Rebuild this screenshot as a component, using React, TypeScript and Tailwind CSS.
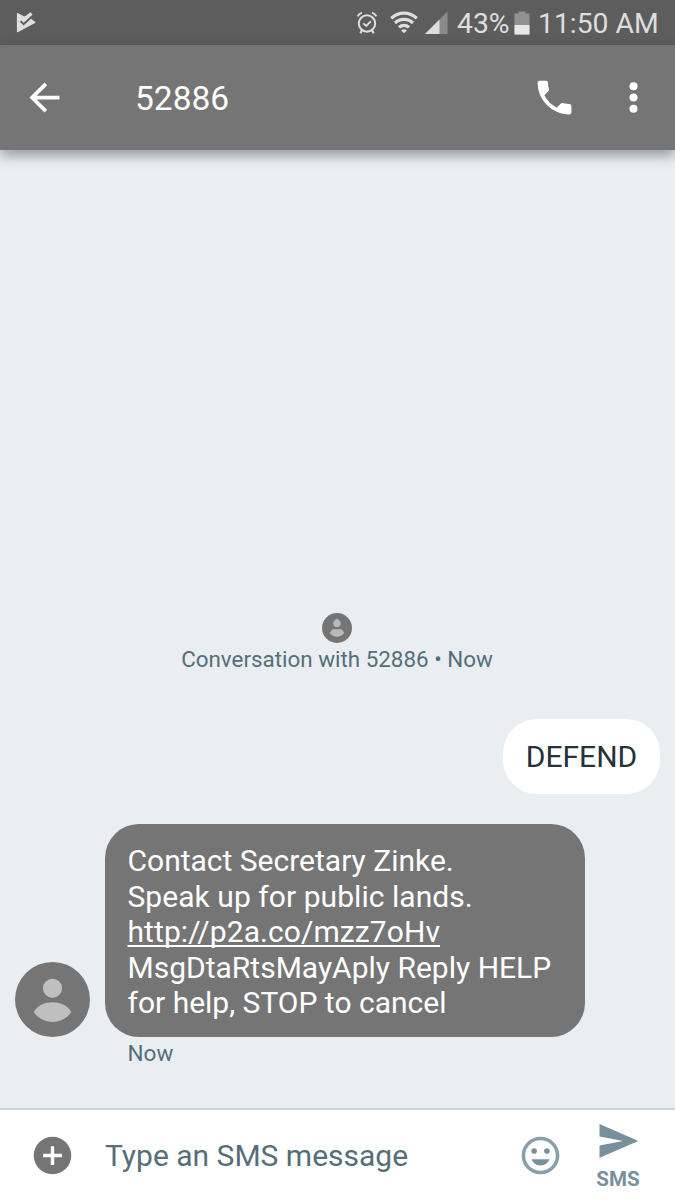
import React from "react";

function StatusBar() {
  return (
    <div className="flex h-[45px] shrink-0 items-center bg-[#5d5d5d] pl-4 text-[#dedede]">
      <svg className="h-[21px] w-5" viewBox="0 0 20 21" aria-hidden="true">
        <path d="M1.500 1.500 L8.600 5.200 L14.600 1 L15.800 2.600 L13.800 6.600 L18.800 10.400 L1.500 19.600 Z" fill="#dedede" stroke="#dedede" strokeWidth="1.200" strokeLinejoin="round" />
        <path d="M4.600 9.200 L7.600 12.200 L16.500 4" fill="none" stroke="#5d5d5d" strokeWidth="1.900" />
      </svg>
      <div className="ml-auto flex items-center">
        <svg className="h-6 w-[22px]" viewBox="0 0 22 24" fill="none" stroke="#dedede" aria-hidden="true">
          <circle cx="11" cy="12.5" r="8.2" strokeWidth="2" />
          <path d="M7.4 12.4 L10.2 15 L14.8 10.4" strokeWidth="1.9" />
          <path d="M1.6 5.4 Q2.8 2.6 6 1.600 M20.4 5.400 Q19.200 2.600 16 1.600" strokeWidth="2" />
          <path d="M6 19 L4.4 22.4 M16 19 L17.6 22.4" strokeWidth="2.2" />
        </svg>
        <svg className="ml-3 h-6 w-7" viewBox="0 0 28 24" fill="none" stroke="#dedede" strokeWidth="3.2" aria-hidden="true">
          <path d="M1.200 7.400 A18.4 18.4 0 0 1 26.800 7.400" />
          <path d="M5 12 A12.8 12.8 0 0 1 23 12" />
          <path d="M9 16.400 A7.2 7.2 0 0 1 19 16.400" />
          <path d="M14 22.3 L11 19.6 A4.3 4.3 0 0 1 17 19.6 Z" fill="#dedede" stroke="none" />
        </svg>
        <svg className="ml-[7px] h-6 w-[23px]" viewBox="0 0 23 24" aria-hidden="true">
          <path d="M0 23 L22.5 0.5 V23 Z" fill="#8b8b8b" />
          <path d="M0 23 L14.5 8.5 V23 Z" fill="#dedede" />
        </svg>
        <span className="ml-[9px] w-[52px] whitespace-nowrap pt-[2px] text-[28.300px] leading-[45px]">43%</span>
        <svg className="ml-[5px] h-6 w-4" viewBox="0 0 16 24" aria-hidden="true">
          <path d="M4.5 0.5 H11.5 V2.5 H15.5 V23.5 H0.5 V2.5 H4.5 Z" fill="#929292" />
          <path d="M0.5 14 H15.5 V23.5 H0.5 Z" fill="#e8e8e8" />
        </svg>
        <span className="ml-2 w-[137px] whitespace-nowrap pt-[2px] text-[28.300px] leading-[45px]">11:50 AM</span>
      </div>
    </div>
  );
}

function AppBar() {
  return (
    <header className="z-10 flex h-[105px] shrink-0 items-center bg-[#757575] pl-[22px] pr-[19px] text-white shadow-[0_6px_12px_0px_rgba(0,0,0,0.34)]">
      <svg className="size-[45px]" viewBox="0 0 24 24" fill="currentColor" role="img" aria-label="Back">
        <path d="M20 11H7.83l5.59-5.59L12 4l-8 8 8 8 1.41-1.41L7.83 13H20v-2z" />
      </svg>
      <h1 className="ml-[68px] pt-[3px] text-[33.500px] leading-10">52886</h1>
      <svg className="ml-auto size-[45px]" viewBox="0 0 24 24" fill="currentColor" role="img" aria-label="Call">
        <path d="M6.62 10.79c1.44 2.83 3.76 5.14 6.59 6.59l2.2-2.2c.27-.27.67-.36 1.02-.24 1.12.37 2.33.57 3.57.57.55 0 1 .45 1 1V20c0 .55-.45 1-1 1-9.39 0-17-7.61-17-17 0-.55.45-1 1-1h3.500c.55 0 1 .45 1 1 0 1.250.2 2.450.57 3.570.11.35.03.74-.25 1.020l-2.200 2.200z" />
      </svg>
      <svg className="ml-[34px] size-[45px]" viewBox="0 0 24 24" fill="currentColor" role="img" aria-label="More options">
        <circle cx="12" cy="6" r="2.150" />
        <circle cx="12" cy="12" r="2.150" />
        <circle cx="12" cy="18" r="2.150" />
      </svg>
    </header>
  );
}

function Avatar({ className }: { className: string }) {
  return (
    <svg className={className} viewBox="0 0 75 75" aria-hidden="true">
      <circle cx="37.5" cy="37.5" r="37.5" fill="#757575" />
      <circle cx="37.5" cy="26.3" r="9.6" fill="#bfbfbf" />
      <path d="M18.700 50 C23 43 30 40.300 37.500 40.300 S52 43 56.300 50 C52 56.500 45 60 37.500 60 S23 56.500 18.700 50 Z" fill="#bfbfbf" />
    </svg>
  );
}

function SmallAvatar() {
  return (
    <svg className="mr-[2px] size-[30px]" viewBox="0 0 30 30" aria-hidden="true">
      <circle cx="15" cy="15" r="15" fill="#757575" />
      <path d="M15 5.800 C17 6.800 18.800 8.400 18.800 10.400 C18.800 12.800 17 14 15 14 S11.200 12.800 11.200 10.400 C11.200 8.400 13 6.800 15 5.800 Z" fill="#b9b9b9" />
      <path d="M10.500 16.200 H19.500 L22.400 19.800 C20.500 22.400 18 23.800 15 23.800 S9.500 22.400 7.600 19.800 Z" fill="#b9b9b9" />
    </svg>
  );
}

function Conversation() {
  return (
    <main className="flex min-h-0 flex-1 flex-col justify-end bg-[#eaeef1] pb-[41px]">
      <div className="flex flex-col items-center">
        <SmallAvatar />
        <p className="mt-[3px] pr-px text-[22.400px] leading-[27px] text-[#546e7a]">Conversation with 52886 • Now</p>
      </div>
      <div className="mr-[15px] mt-[46px] flex h-[75px] w-[157px] items-center justify-center self-end rounded-[34px] bg-white text-[30px] leading-[36px] text-[#263238]">
        DEFEND
      </div>
      <div className="mt-[30px] flex items-end pl-[15px]">
        <Avatar className="size-[75px]" />
        <div className="ml-[15px] h-[213px] w-[480px] rounded-[34px] bg-[#757575] pl-[22.500px] pt-[19px] text-[30px] leading-[35.6px] text-white">
          <p>Contact Secretary Zinke.</p>
          <p className="tracking-[0.050px]">Speak up for public lands.</p>
          <p>
            <a className="tracking-[0.080px] underline decoration-[1.5px] underline-offset-[3px] [text-decoration-skip-ink:none]">http://p2a.co/mzz7oHv</a>
          </p>
          <p>MsgDtaRtsMayAply Reply HELP</p>
          <p>for help, STOP to cancel</p>
        </div>
      </div>
      <p className="ml-[127.500px] mt-[3px] text-[22.5px] leading-[27px] text-[#546e7a]">Now</p>
    </main>
  );
}

function Composer() {
  return (
    <footer className="flex h-[92px] shrink-0 items-center border-t-2 border-[#cfd4d8] bg-white">
      <svg className="ml-[30px] size-[45px]" viewBox="0 0 24 24" role="img" aria-label="Attach">
        <circle cx="12" cy="12" r="10" fill="#757575" />
        <path d="M12 7v10M7 12h10" stroke="#fff" strokeWidth="1.8" />
      </svg>
      <span className="ml-[30px] pt-[2px] text-[30px] leading-9 text-[#546e7a]">Type an SMS message</span>
      <svg className="ml-auto size-[45px]" viewBox="0 0 24 24" role="img" aria-label="Emoji">
        <circle cx="12" cy="12" r="9.100" fill="none" stroke="#87a0aa" strokeWidth="1.900" />
        <circle cx="8.600" cy="9.600" r="1.500" fill="#78909c" />
        <circle cx="15.400" cy="9.600" r="1.500" fill="#78909c" />
        <path d="M7.200 14h9.600c-.8 2-2.500 3.300-4.800 3.300s-4-1.300-4.800-3.300z" fill="#78909c" />
      </svg>
      <div className="ml-[32.500px] mr-[34px] flex w-[46px] flex-col items-center pt-[4px] text-[#78909c]">
        <svg className="ml-[2px] h-[34px] w-10" viewBox="0 0 40 34" fill="currentColor" role="img" aria-label="Send">
          <path d="M0.500 0 L39.500 17 L0.500 33.800 V21.500 L24 17 L0.500 12.500 Z" />
        </svg>
        <span className="mt-[9px] text-[20.600px] font-bold leading-6">SMS</span>
      </div>
    </footer>
  );
}

export default function App() {
  return (
    <div className="flex h-[1200px] w-[675px] flex-col overflow-hidden font-['Roboto',sans-serif]">
      <StatusBar />
      <AppBar />
      <Conversation />
      <Composer />
    </div>
  );
}
